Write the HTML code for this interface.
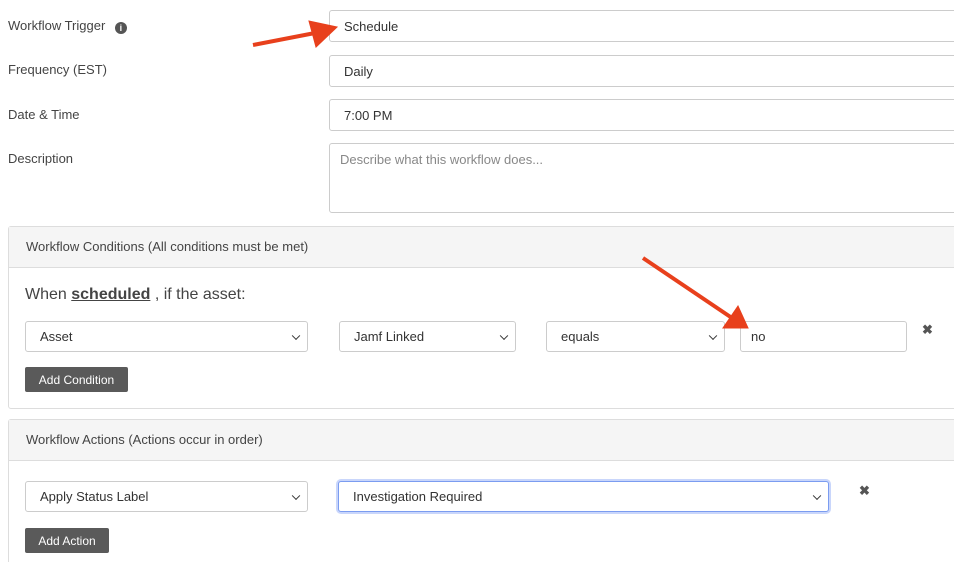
<!DOCTYPE html>
<html style="overflow:hidden;height:562px"><head><meta charset="utf-8"><style>
body{margin:0;width:954px;height:562px;overflow:hidden;background:#fff;font-family:"Liberation Sans",sans-serif;color:#333;position:relative}
.a{position:absolute}
.lbl{font-size:13px;color:#444;left:8px}
.inp{position:absolute;border:1px solid #ccc;border-radius:3px;background:#fff;box-sizing:border-box;font-size:13px;color:#333;padding-left:14px;display:flex;align-items:center}
.sel::after{content:"";position:absolute;right:8px;top:50%;width:5px;height:5px;border-right:1.8px solid #333;border-bottom:1.8px solid #333;transform:translateY(-70%) rotate(45deg)}
.btn{position:absolute;background:#5a5a5a;color:#fff;font-size:12px;border-radius:2px;display:flex;align-items:center;justify-content:center}
.panel{position:absolute;left:8px;width:960px;border:1px solid #ddd;border-radius:3px;box-sizing:border-box}
.ph{height:40px;background:#f5f5f5;border-bottom:1px solid #ddd;font-size:13px;color:#444;padding-left:17px;line-height:40px}
.x{position:absolute;font-size:13px;color:#555;font-weight:bold}
</style></head><body>
<div class="a lbl" style="top:18px">Workflow Trigger <span style="display:inline-block;width:12px;height:12px;border-radius:50%;background:#555;color:#fff;font-size:9px;line-height:12px;text-align:center;font-weight:bold;margin-left:6px;vertical-align:-1px">i</span></div>
<div class="a lbl" style="top:62px">Frequency (EST)</div>
<div class="a lbl" style="top:107px">Date &amp; Time</div>
<div class="a lbl" style="top:151px">Description</div>
<div class="inp" style="left:329px;top:10px;width:640px;height:32px">Schedule</div>
<div class="inp" style="left:329px;top:55px;width:640px;height:32px">Daily</div>
<div class="inp" style="left:329px;top:99px;width:640px;height:32px">7:00 PM</div>
<div class="inp" style="left:329px;top:143px;width:640px;height:70px;align-items:flex-start;padding-top:8px;padding-left:10px;color:#888">Describe what this workflow does...</div>

<div class="panel" style="top:226px;height:183px"><div class="ph">Workflow Conditions (All conditions must be met)</div></div>
<div class="a" style="left:25px;top:286px;font-size:16px;color:#444">When <b style="text-decoration:underline">scheduled</b> , if the asset:</div>
<div class="inp sel" style="left:25px;top:321px;width:283px;height:31px">Asset</div>
<div class="inp sel" style="left:339px;top:321px;width:177px;height:31px">Jamf Linked</div>
<div class="inp sel" style="left:546px;top:321px;width:179px;height:31px">equals</div>
<div class="inp" style="left:740px;top:321px;width:167px;height:31px;padding-left:10px">no</div>
<div class="x" style="left:922px;top:322px">✖</div>
<div class="btn" style="left:25px;top:367px;width:103px;height:25px">Add Condition</div>

<div class="panel" style="top:419px;height:150px"><div class="ph">Workflow Actions (Actions occur in order)</div></div>
<div class="inp sel" style="left:25px;top:481px;width:283px;height:31px">Apply Status Label</div>
<div class="inp sel" style="left:338px;top:481px;width:491px;height:31px;border-color:#7b9cf0;box-shadow:0 0 0 2px #c9d6fb">Investigation Required</div>
<div class="x" style="left:859px;top:483px">✖</div>
<div class="btn" style="left:25px;top:528px;width:84px;height:25px">Add Action</div>

<svg class="a" style="left:0;top:0" width="954" height="562">
<g fill="#e8401c" stroke="#e8401c">
<line x1="253" y1="45" x2="315" y2="33" stroke-width="4"/>
<polygon points="337,27 309,21 316,47" stroke-width="1"/>
<line x1="643" y1="258" x2="732" y2="318" stroke-width="4"/>
<polygon points="748,328 723,328 738,306" stroke-width="1"/>
</g></svg>
</body></html>
